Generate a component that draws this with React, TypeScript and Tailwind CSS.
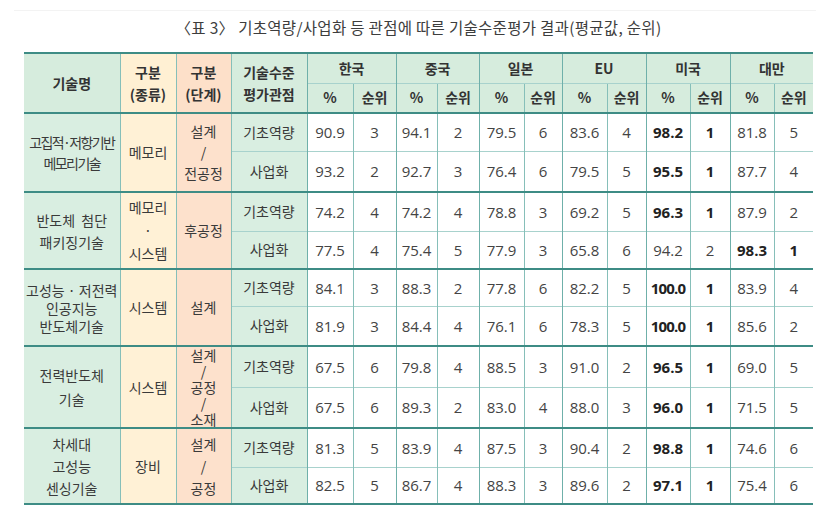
import React from "react";

type Group = {
  name: string[];
  nameLead: string;
  nameTight?: boolean;
  kind: string[];
  kindLead: string;
  stage: string[];
  stageLead: string;
  rows: { label: string; h: string; vals: string[] }[];
};

const countries = ["한국", "중국", "일본", "EU", "미국", "대만"];

const groups: Group[] = [
  {
    name: ["고집적·저항기반", "메모리기술"],
    nameLead: "leading-[21px]",
    nameTight: true,
    kind: ["메모리"],
    kindLead: "leading-[21px]",
    stage: ["설계", "/", "전공정"],
    stageLead: "leading-[21px]",
    rows: [
      { label: "기초역량", h: "h-[38px]", vals: ["90.9", "3", "94.1", "2", "79.5", "6", "83.6", "4", "98.2", "1", "81.8", "5"] },
      { label: "사업화", h: "h-[41px]", vals: ["93.2", "2", "92.7", "3", "76.4", "6", "79.5", "5", "95.5", "1", "87.7", "4"] },
    ],
  },
  {
    name: ["반도체  첨단", "패키징기술"],
    nameLead: "leading-[22px]",
    kind: ["메모리", "·", "시스템"],
    kindLead: "leading-[23px]",
    stage: ["후공정"],
    stageLead: "leading-[21px]",
    rows: [
      { label: "기초역량", h: "h-[39px]", vals: ["74.2", "4", "74.2", "4", "78.8", "3", "69.2", "5", "96.3", "1", "87.9", "2"] },
      { label: "사업화", h: "h-[38px]", vals: ["77.5", "4", "75.4", "5", "77.9", "3", "65.8", "6", "94.2", "2", "98.3", "1"] },
    ],
  },
  {
    name: ["고성능 · 저전력", "인공지능", "반도체기술"],
    nameLead: "leading-[18px]",
    kind: ["시스템"],
    kindLead: "leading-[21px]",
    stage: ["설계"],
    stageLead: "leading-[21px]",
    rows: [
      { label: "기초역량", h: "h-[37px]", vals: ["84.1", "3", "88.3", "2", "77.8", "6", "82.2", "5", "100.0", "1", "83.9", "4"] },
      { label: "사업화", h: "h-[40px]", vals: ["81.9", "3", "84.4", "4", "76.1", "6", "78.3", "5", "100.0", "1", "85.6", "2"] },
    ],
  },
  {
    name: ["전력반도체", "기술"],
    nameLead: "leading-[24px]",
    kind: ["시스템"],
    kindLead: "leading-[21px]",
    stage: ["설계", "/", "공정", "/", "소재"],
    stageLead: "leading-[16px]",
    rows: [
      { label: "기초역량", h: "h-[41px]", vals: ["67.5", "6", "79.8", "4", "88.5", "3", "91.0", "2", "96.5", "1", "69.0", "5"] },
      { label: "사업화", h: "h-[41px]", vals: ["67.5", "6", "89.3", "2", "83.0", "4", "88.0", "3", "96.0", "1", "71.5", "5"] },
    ],
  },
  {
    name: ["차세대", "고성능", "센싱기술"],
    nameLead: "leading-[22px]",
    kind: ["장비"],
    kindLead: "leading-[21px]",
    stage: ["설계", "/", "공정"],
    stageLead: "leading-[22px]",
    rows: [
      { label: "기초역량", h: "h-[39px]", vals: ["81.3", "5", "83.9", "4", "87.5", "3", "90.4", "2", "98.8", "1", "74.6", "6"] },
      { label: "사업화", h: "h-[37px]", vals: ["82.5", "5", "86.7", "4", "88.3", "3", "89.6", "2", "97.1", "1", "75.4", "6"] },
    ],
  },
];

const kr = "font-['Noto_Sans_CJK_KR',sans-serif]";
const num = "font-['Open_Sans','Noto_Sans_CJK_KR',sans-serif]";

const vline = "border-l border-l-[#86bfb9]";
const thick = "border-t-2 border-t-[#3e8c85]";
const thin = "border-t border-t-[#a8d2cd]";

const Lines = ({ lines, lead }: { lines: string[]; lead: string }) => (
  <div className={`flex flex-col items-center ${lead}`}>
    {lines.map((l, i) => (
      <span key={i} className="block whitespace-pre">{l}</span>
    ))}
  </div>
);

export default function App() {
  return (
    <div className="w-[830px] h-[516px] bg-white pt-[10px] overflow-hidden">
      <div className="mx-[14px] border-t border-[#f3f3f3]" />
      <div className="w-[789px] ml-[24px]">
        <div className={`${kr} text-center text-[15.5px] tracking-[0.3px] leading-[20px] text-[#3d3d3d] pt-[6px] pb-[15px]`}>
          〈표 3〉 기초역량/사업화 등 관점에 따른 기술수준평가 결과(평균값, 순위)
        </div>
        <table className={`w-[789px] table-fixed border-collapse border-y-2 border-y-[#3e8c85] ${kr} text-[#333]`}>
          <colgroup>
            <col className="w-[96px]" />
            <col className="w-[56px]" />
            <col className="w-[55px]" />
            <col className="w-[76px]" />
            <col className="w-[46px]" />
            <col className="w-[43px]" />
            <col className="w-[41px]" />
            <col className="w-[42px]" />
            <col className="w-[45px]" />
            <col className="w-[38px]" />
            <col className="w-[45px]" />
            <col className="w-[39px]" />
            <col className="w-[44px]" />
            <col className="w-[40px]" />
            <col className="w-[44px]" />
            <col className="w-[39px]" />
          </colgroup>
          <thead>
            <tr className="h-[30px] text-[14px] font-bold">
              <th rowSpan={2} className="bg-[#d6ecdd] p-0 align-middle">기술명</th>
              <th rowSpan={2} className={`bg-[#fff0d3] p-0 ${vline}`}>
                <Lines lines={["구분", "(종류)"]} lead="leading-[22px]" />
              </th>
              <th rowSpan={2} className={`bg-[#fde0c9] p-0 ${vline}`}>
                <Lines lines={["구분", "(단계)"]} lead="leading-[22px]" />
              </th>
              <th rowSpan={2} className={`bg-[#d6ecdd] p-0 ${vline}`}>
                <Lines lines={["기술수준", "평가관점"]} lead="leading-[22px]" />
              </th>
              {countries.map((c) => (
                <th key={c} colSpan={2} className={`bg-[#d6ecdd] p-0 border-l border-l-[#6fb0aa]`}>
                  {c}
                </th>
              ))}
            </tr>
            <tr className="h-[30px] text-[14px] font-bold">
              {countries.map((c) => (
                <React.Fragment key={c}>
                  <th className={`bg-[#d6ecdd] p-0 border-l border-l-[#6fb0aa] ${thin}`}>%</th>
                  <th className={`bg-[#d6ecdd] p-0 ${vline} ${thin}`}>순위</th>
                </React.Fragment>
              ))}
            </tr>
          </thead>
          <tbody>
            {groups.map((g, gi) =>
              g.rows.map((r, ri) => {
                const top = ri === 0 ? thick : thin;
                return (
                  <tr key={`${gi}-${ri}`} className={r.h}>
                    {ri === 0 && (
                      <>
                        <td rowSpan={2} className={`bg-[#d9eee1] p-0 text-[14px] text-[#3a3a3a] ${top}`}>
                          <div className={g.nameTight ? "tracking-[-1.6px]" : ""}>
                            <Lines lines={g.name} lead={g.nameLead} />
                          </div>
                        </td>
                        <td rowSpan={2} className={`bg-[#fff1d6] p-0 text-[14px] text-[#3a3a3a] ${vline} ${top}`}>
                          <Lines lines={g.kind} lead={g.kindLead} />
                        </td>
                        <td rowSpan={2} className={`bg-[#fde1cc] p-0 text-[14px] text-[#3a3a3a] ${vline} ${top}`}>
                          <Lines lines={g.stage} lead={g.stageLead} />
                        </td>
                      </>
                    )}
                    <td className={`bg-[#d9eee1] p-0 text-center text-[14px] text-[#3a3a3a] ${vline} ${top}`}>
                      {r.label}
                    </td>
                    {r.vals.map((v, vi) => {
                      const pairRank = r.vals[vi % 2 === 0 ? vi + 1 : vi];
                      const bold = pairRank === "1";
                      const sep = vi % 2 === 0 ? "border-l border-l-[#6fb0aa]" : vline;
                      return (
                        <td
                          key={vi}
                          className={`bg-white p-0 text-center ${num} text-[15px] ${
                            bold ? "font-bold text-[#222]" : "text-[#444]"
                          } ${v === "100.0" ? "tracking-[-0.8px]" : ""} ${sep} ${top}`}
                        >
                          {v}
                        </td>
                      );
                    })}
                  </tr>
                );
              })
            )}
          </tbody>
        </table>
      </div>
    </div>
  );
}
